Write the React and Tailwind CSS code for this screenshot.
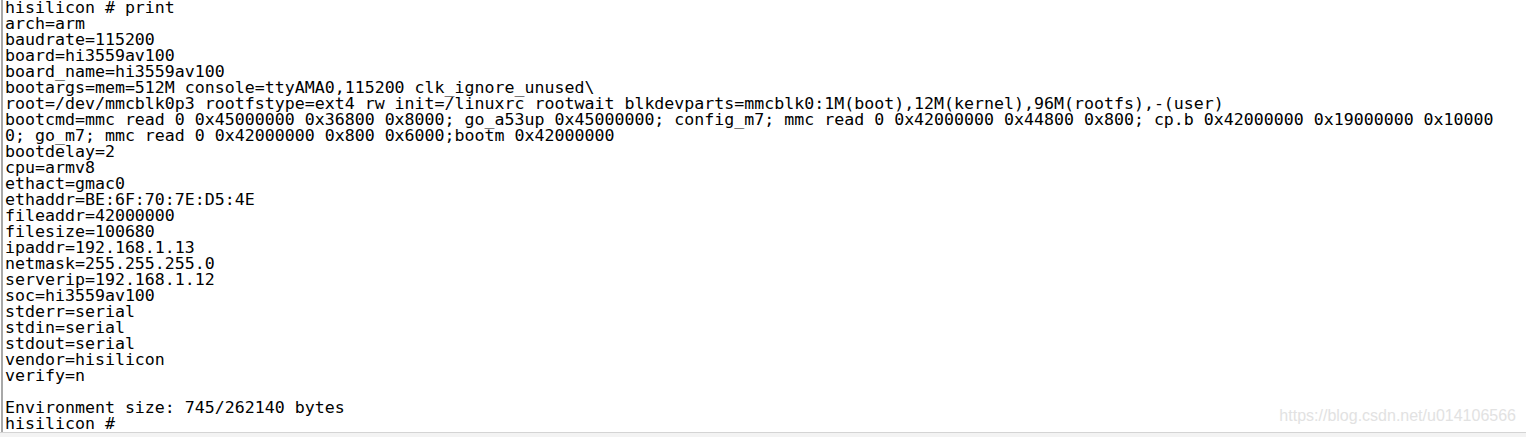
import React from "react";

const lines = [
  "hisilicon # print",
  "arch=arm",
  "baudrate=115200",
  "board=hi3559av100",
  "board_name=hi3559av100",
  "bootargs=mem=512M console=ttyAMA0,115200 clk_ignore_unused\\",
  "root=/dev/mmcblk0p3 rootfstype=ext4 rw init=/linuxrc rootwait blkdevparts=mmcblk0:1M(boot),12M(kernel),96M(rootfs),-(user)",
  "bootcmd=mmc read 0 0x45000000 0x36800 0x8000; go_a53up 0x45000000; config_m7; mmc read 0 0x42000000 0x44800 0x800; cp.b 0x42000000 0x19000000 0x10000",
  "0; go_m7; mmc read 0 0x42000000 0x800 0x6000;bootm 0x42000000",
  "bootdelay=2",
  "cpu=armv8",
  "ethact=gmac0",
  "ethaddr=BE:6F:70:7E:D5:4E",
  "fileaddr=42000000",
  "filesize=100680",
  "ipaddr=192.168.1.13",
  "netmask=255.255.255.0",
  "serverip=192.168.1.12",
  "soc=hi3559av100",
  "stderr=serial",
  "stdin=serial",
  "stdout=serial",
  "vendor=hisilicon",
  "verify=n",
  "",
  "Environment size: 745/262140 bytes",
  "hisilicon #",
];

export default function App() {
  return (
    <div className="w-[1526px] h-[437px] bg-[#f3f3f3] overflow-hidden">
      <div className="relative h-[433px] bg-white border-b border-[#d4d4d4] pl-[1px]">
        <div
          className="h-full border-l-2 border-[#a8a8a8] pl-[2px] text-black whitespace-pre text-[16.6px] leading-[16px]"
          style={{ fontFamily: '"DejaVu Sans Mono", monospace' }}
        >
          {lines.map((line, i) => (
            <div key={i} className="h-[16px]">
              {line}
            </div>
          ))}
        </div>
        <div
          className="absolute right-[10px] bottom-[7px] text-[16px] leading-[18px] text-[#e2e2e2]"
          style={{ fontFamily: '"Liberation Sans", Arial, sans-serif' }}
        >
          https://blog.csdn.net/u014106566
        </div>
      </div>
    </div>
  );
}
